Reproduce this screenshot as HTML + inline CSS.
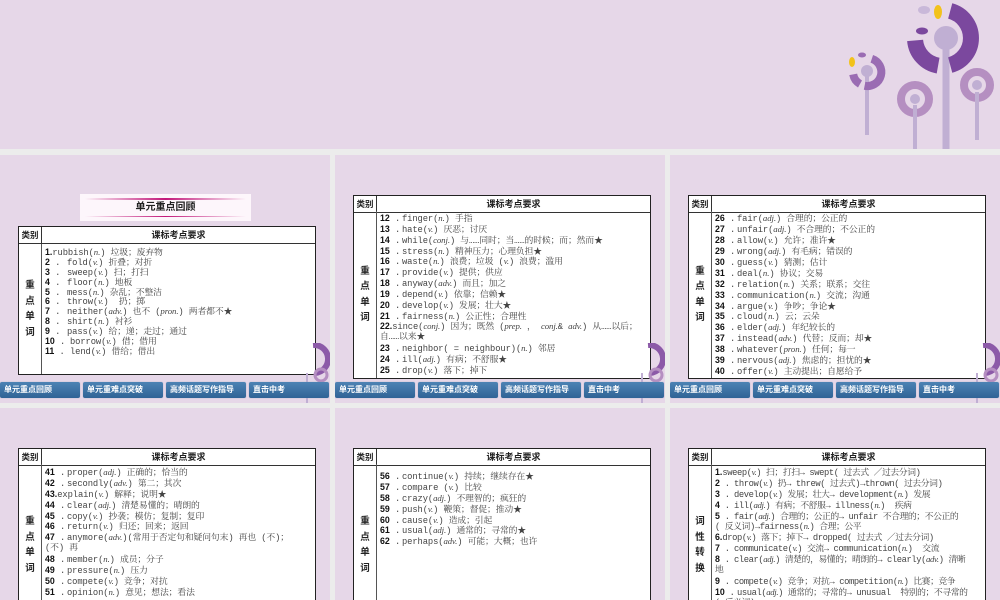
<!DOCTYPE html>
<html><head><meta charset="utf-8">
<style>
*{margin:0;padding:0;box-sizing:border-box}
body{width:1000px;height:600px;overflow:hidden;background:#ececec;position:relative;font-family:"Liberation Mono","Noto Serif CJK SC",monospace}
.sl{position:absolute;background:#e6d7e8;overflow:hidden}
.tb{position:absolute;left:18px;width:298px;background:#fff;border:1.5px solid #222;overflow:hidden}
.hd{height:17px;border-bottom:1px solid #333;position:relative;font-family:"Liberation Sans","Noto Sans CJK SC",sans-serif;font-weight:bold;font-size:9px;color:#222}
.hd .a{position:absolute;left:0;top:0;width:23px;height:16px;border-right:1px solid #333;text-align:center;line-height:16px;font-size:8.5px}
.hd .b{position:absolute;left:23px;right:0;top:0;text-align:center;line-height:16px}
.bd{position:absolute;left:0;right:0;bottom:0}
.bd .a{position:absolute;left:0;top:0;bottom:0;width:23px;border-right:1.5px solid #555;font-family:"Liberation Sans","Noto Sans CJK SC",sans-serif;font-weight:bold;font-size:9.5px;color:#222;display:flex;flex-direction:column;justify-content:center;align-items:center;line-height:15.5px}
.bd .c{position:absolute;left:26px;right:0;top:3px;font-size:8.8px;color:#444;white-space:nowrap;font-family:"Liberation Mono","Noto Serif CJK SC",monospace;letter-spacing:-0.1px;--lh:11px}
.c div{height:var(--lh);line-height:var(--lh);overflow:visible}
.c b{font-family:"Liberation Sans",sans-serif;color:#111;letter-spacing:0}
.c .n{display:inline-block;width:22px}
.c i{font-style:italic;font-family:"Liberation Serif",serif}
.nav{position:absolute;top:227px;height:16px;left:0;width:330px}
.nav div{position:absolute;top:0;height:16px;width:80px;background:linear-gradient(#4d83b4,#2f6396);border-radius:2px;color:#fff;font-family:"Liberation Sans","Noto Sans CJK SC",sans-serif;font-weight:bold;font-size:8px;line-height:16px;padding-left:4px;box-shadow:0 0 1px #9ab}
.deco{position:absolute;right:0;top:188px;width:45px;height:60px}
</style></head><body>

<!-- top slide -->
<div class="sl" style="left:0;top:0;width:1000px;height:149px">
<svg style="position:absolute;left:840px;top:0" width="160" height="150">
 <line x1="106" y1="40" x2="106" y2="150" stroke="#c0afd3" stroke-width="7"/>
 <path d="M110.2 10.95 A28 28 0 0 1 110.2 65.05" stroke="#7b489e" stroke-width="16" fill="none"/>
 <path d="M98.1 65.6 A28 28 0 0 1 75.1 40.4" stroke="#7b489e" stroke-width="16" fill="none"/>
 <circle cx="106" cy="38" r="12" fill="#c0afd3"/>
 <ellipse cx="84" cy="10" rx="6" ry="4" fill="#c9b8d9"/>
 <ellipse cx="98" cy="12" rx="4" ry="7" fill="#f2c21b"/>
 <ellipse cx="82" cy="31" rx="6" ry="3.5" fill="#7b489e"/>
 <line x1="27" y1="72" x2="27" y2="135" stroke="#c0afd3" stroke-width="4"/>
 <path d="M31.8 58.8 A14 14 0 0 1 24.6 85.8" stroke="#9a6cb3" stroke-width="8" fill="none"/>
 <path d="M20 84 A14 14 0 0 1 13.2 74.4" stroke="#9a6cb3" stroke-width="8" fill="none"/>
 <circle cx="27" cy="71" r="6" fill="#c0afd3"/>
 <ellipse cx="22" cy="55" rx="4" ry="2.5" fill="#9a6cb3"/>
 <ellipse cx="12" cy="62" rx="3" ry="5" fill="#f2c21b"/>
 <circle cx="75" cy="99" r="14" fill="none" stroke="#b58fc1" stroke-width="8"/>
 <circle cx="75" cy="99" r="5" fill="#c0afd3"/>
 <line x1="75" y1="105" x2="75" y2="150" stroke="#c0afd3" stroke-width="4"/>
 <circle cx="137" cy="85" r="13" fill="none" stroke="#b58fc1" stroke-width="8"/>
 <circle cx="137" cy="85" r="5" fill="#c0afd3"/>
 <line x1="137" y1="92" x2="137" y2="140" stroke="#c0afd3" stroke-width="4"/>
</svg>
</div>

<!-- Slide 1 -->
<div class="sl" style="left:0;top:155px;width:330px;height:248px">
<div style="position:absolute;left:80px;top:39px;width:171px;height:27px;background:#fdf6fb;text-align:center;font-family:'Liberation Sans','Noto Sans CJK SC',sans-serif;font-weight:bold;font-size:10px;line-height:27px;color:#222">
<div style="position:absolute;left:5px;right:5px;top:4px;height:1.5px;background:linear-gradient(90deg,transparent,#c2187a,transparent)"></div>
<div style="position:absolute;left:5px;right:5px;bottom:4px;height:1.5px;background:linear-gradient(90deg,transparent,#c2187a,transparent)"></div>
单元重点回顾</div>
<div class="tb" style="top:71px;height:149px">
<div class="hd"><div class="a">类别</div><div class="b">课标考点要求</div></div>
<div class="bd" style="top:17px"><div class="a">重<br>点<br>单<br>词</div>
<div class="c" style="--lh:9.9px;top:4px">
<div><b>1.</b>rubbish(<i>n.</i>) 垃圾；废弃物</div>
<div><span class="n"><b>2</b> .</span>fold(<i>v.</i>) 折叠；对折</div>
<div><span class="n"><b>3</b> .</span>sweep(<i>v.</i>) 扫；打扫</div>
<div><span class="n"><b>4</b> .</span>floor(<i>n.</i>) 地板</div>
<div><span class="n"><b>5</b> .</span>mess(<i>n.</i>) 杂乱；不整洁</div>
<div><span class="n"><b>6</b> .</span>throw(<i>v.</i>)&nbsp; 扔；掷</div>
<div><span class="n"><b>7</b> .</span>neither(<i>adv.</i>) 也不 (<i>pron.</i>) 两者都不★</div>
<div><span class="n"><b>8</b> .</span>shirt(<i>n.</i>) 衬衫</div>
<div><span class="n"><b>9</b> .</span>pass(<i>v.</i>) 给；递；走过；通过</div>
<div><span class="n" style="width:25px"><b>10</b> .</span>borrow(<i>v.</i>) 借；借用</div>
<div><span class="n" style="width:25px"><b>11</b> .</span>lend(<i>v.</i>) 借给；借出</div></div></div>
</div>
<svg class="deco" viewBox="0 0 45 60"><path d="M28 2 A14 14 0 0 1 30 30" stroke="#8c5aa8" stroke-width="6" fill="none"/><circle cx="36" cy="32" r="6" fill="none" stroke="#b58fc1" stroke-width="3"/><line x1="22" y1="30" x2="22" y2="60" stroke="#c0afd3" stroke-width="2"/></svg>
<div class="nav"><div style="left:0">单元重点回顾</div><div style="left:83px">单元重难点突破</div><div style="left:166px">高频话题写作指导</div><div style="left:249px">直击中考</div></div>
</div>

<!-- Slide 2 -->
<div class="sl" style="left:335px;top:155px;width:330px;height:248px">
<div class="tb" style="top:40px;height:184px">
<div class="hd"><div class="a">类别</div><div class="b">课标考点要求</div></div>
<div class="bd" style="top:15px"><div class="a">重<br>点<br>单<br>词</div>
<div class="c" style="--lh:10.85px;top:2px">
<div><span class="n"><b>12</b> .</span>finger(<i>n.</i>) 手指</div>
<div><span class="n"><b>13</b> .</span>hate(<i>v.</i>) 厌恶；讨厌</div>
<div><span class="n"><b>14</b> .</span>while(<i>conj.</i>) 与……同时；当……的时候；而；然而★</div>
<div><span class="n"><b>15</b> .</span>stress(<i>n.</i>) 精神压力；心理负担★</div>
<div><span class="n"><b>16</b> .</span>waste(<i>n.</i>) 浪费；垃圾 (<i>v.</i>) 浪费；滥用</div>
<div><span class="n"><b>17</b> .</span>provide(<i>v.</i>) 提供；供应</div>
<div><span class="n"><b>18</b> .</span>anyway(<i>adv.</i>) 而且；加之</div>
<div><span class="n"><b>19</b> .</span>depend(<i>v.</i>) 依靠；信赖★</div>
<div><span class="n"><b>20</b> .</span>develop(<i>v.</i>) 发展；壮大★</div>
<div><span class="n"><b>21</b> .</span>fairness(<i>n.</i>) 公正性；合理性</div>
<div><b>22.</b>since(<i>conj.</i>) 因为；既然 (<i>prep.</i> ， <i>conj.</i>&amp; <i>adv.</i>) 从……以后；</div>
<div>自……以来★</div>
<div><span class="n"><b>23</b> .</span>neighbor( = neighbour)(<i>n.</i>) 邻居</div>
<div><span class="n"><b>24</b> .</span>ill(<i>adj.</i>) 有病；不舒服★</div>
<div><span class="n"><b>25</b> .</span>drop(<i>v.</i>) 落下；掉下</div></div></div>
</div>
<svg class="deco" viewBox="0 0 45 60"><path d="M28 2 A14 14 0 0 1 30 30" stroke="#8c5aa8" stroke-width="6" fill="none"/><circle cx="36" cy="32" r="6" fill="none" stroke="#b58fc1" stroke-width="3"/><line x1="22" y1="30" x2="22" y2="60" stroke="#c0afd3" stroke-width="2"/></svg>
<div class="nav"><div style="left:0">单元重点回顾</div><div style="left:83px">单元重难点突破</div><div style="left:166px">高频话题写作指导</div><div style="left:249px">直击中考</div></div>
</div>

<!-- Slide 3 -->
<div class="sl" style="left:670px;top:155px;width:330px;height:248px">
<div class="tb" style="top:40px;height:184px">
<div class="hd"><div class="a">类别</div><div class="b">课标考点要求</div></div>
<div class="bd" style="top:15px"><div class="a">重<br>点<br>单<br>词</div>
<div class="c" style="--lh:10.95px;top:2px">
<div><span class="n"><b>26</b> .</span>fair(<i>adj.</i>) 合理的；公正的</div>
<div><span class="n"><b>27</b> .</span>unfair(<i>adj.</i>) 不合理的；不公正的</div>
<div><span class="n"><b>28</b> .</span>allow(<i>v.</i>) 允许；准许★</div>
<div><span class="n"><b>29</b> .</span>wrong(<i>adj.</i>) 有毛病；错误的</div>
<div><span class="n"><b>30</b> .</span>guess(<i>v.</i>) 猜测；估计</div>
<div><span class="n"><b>31</b> .</span>deal(<i>n.</i>) 协议；交易</div>
<div><span class="n"><b>32</b> .</span>relation(<i>n.</i>) 关系；联系；交往</div>
<div><span class="n"><b>33</b> .</span>communication(<i>n.</i>) 交流；沟通</div>
<div><span class="n"><b>34</b> .</span>argue(<i>v.</i>) 争吵；争论★</div>
<div><span class="n"><b>35</b> .</span>cloud(<i>n.</i>) 云；云朵</div>
<div><span class="n"><b>36</b> .</span>elder(<i>adj.</i>) 年纪较长的</div>
<div><span class="n"><b>37</b> .</span>instead(<i>adv.</i>) 代替；反而；却★</div>
<div><span class="n"><b>38</b> .</span>whatever(<i>pron.</i>) 任何；每一</div>
<div><span class="n"><b>39</b> .</span>nervous(<i>adj.</i>) 焦虑的；担忧的★</div>
<div><span class="n"><b>40</b> .</span>offer(<i>v.</i>) 主动提出；自愿给予</div></div></div>
</div>
<svg class="deco" viewBox="0 0 45 60"><path d="M28 2 A14 14 0 0 1 30 30" stroke="#8c5aa8" stroke-width="6" fill="none"/><circle cx="36" cy="32" r="6" fill="none" stroke="#b58fc1" stroke-width="3"/><line x1="22" y1="30" x2="22" y2="60" stroke="#c0afd3" stroke-width="2"/></svg>
<div class="nav"><div style="left:0">单元重点回顾</div><div style="left:83px">单元重难点突破</div><div style="left:166px">高频话题写作指导</div><div style="left:249px">直击中考</div></div>
</div>

<!-- Slide 4 -->
<div class="sl" style="left:0;top:408px;width:330px;height:192px">
<div class="tb" style="top:40px;height:160px">
<div class="hd"><div class="a">类别</div><div class="b">课标考点要求</div></div>
<div class="bd" style="top:15px"><div class="a" style="justify-content:flex-start;padding-top:50px">重<br>点<br>单<br>词</div>
<div class="c" style="--lh:10.9px;top:3px">
<div><span class="n"><b>41</b> .</span>proper(<i>adj.</i>) 正确的；恰当的</div>
<div><span class="n"><b>42</b> .</span>secondly(<i>adv.</i>) 第二；其次</div>
<div><b>43.</b>explain(<i>v.</i>) 解释；说明★</div>
<div><span class="n"><b>44</b> .</span>clear(<i>adj.</i>) 清楚易懂的；晴朗的</div>
<div><span class="n"><b>45</b> .</span>copy(<i>v.</i>) 抄袭；模仿；复制；复印</div>
<div><span class="n"><b>46</b> .</span>return(<i>v.</i>) 归还；回来；返回</div>
<div><span class="n"><b>47</b> .</span>anymore(<i>adv.</i>)(常用于否定句和疑问句末) 再也 (不)；</div>
<div>(不) 再</div>
<div><span class="n"><b>48</b> .</span>member(<i>n.</i>) 成员；分子</div>
<div><span class="n"><b>49</b> .</span>pressure(<i>n.</i>) 压力</div>
<div><span class="n"><b>50</b> .</span>compete(<i>v.</i>) 竞争；对抗</div>
<div><span class="n"><b>51</b> .</span>opinion(<i>n.</i>) 意见；想法；看法</div></div></div>
</div>
</div>

<!-- Slide 5 -->
<div class="sl" style="left:335px;top:408px;width:330px;height:192px">
<div class="tb" style="top:40px;height:160px">
<div class="hd"><div class="a">类别</div><div class="b">课标考点要求</div></div>
<div class="bd" style="top:15px"><div class="a" style="justify-content:flex-start;padding-top:50px">重<br>点<br>单<br>词</div>
<div class="c" style="--lh:10.9px;top:7px">
<div><span class="n"><b>56</b> .</span>continue(<i>v.</i>) 持续；继续存在★</div>
<div><span class="n"><b>57</b> .</span>compare (<i>v.</i>) 比较</div>
<div><span class="n"><b>58</b> .</span>crazy(<i>adj.</i>) 不理智的；疯狂的</div>
<div><span class="n"><b>59</b> .</span>push(<i>v.</i>) 鞭策；督促；推动★</div>
<div><span class="n"><b>60</b> .</span>cause(<i>v.</i>) 造成；引起</div>
<div><span class="n"><b>61</b> .</span>usual(<i>adj.</i>) 通常的；寻常的★</div>
<div><span class="n"><b>62</b> .</span>perhaps(<i>adv.</i>) 可能；大概；也许</div></div></div>
</div>
</div>

<!-- Slide 6 -->
<div class="sl" style="left:670px;top:408px;width:330px;height:192px">
<div class="tb" style="top:40px;height:160px">
<div class="hd"><div class="a">类别</div><div class="b">课标考点要求</div></div>
<div class="bd" style="top:15px"><div class="a" style="justify-content:flex-start;padding-top:50px">词<br>性<br>转<br>换</div>
<div class="c" style="--lh:10.9px;top:3px;letter-spacing:-0.4px">
<div><b>1.</b>sweep(<i>v.</i>) 扫；打扫→ swept( 过去式 ／过去分词)</div>
<div><span class="n" style="width:19px"><b>2</b> .</span>throw(<i>v.</i>) 扔→ threw( 过去式)→thrown( 过去分词)</div>
<div><span class="n" style="width:19px"><b>3</b> .</span>develop(<i>v.</i>) 发展；壮大→ development(<i>n.</i>) 发展</div>
<div><span class="n" style="width:19px"><b>4</b> .</span>ill(<i>adj.</i>) 有病；不舒服→ illness(<i>n.</i>)&nbsp; 疾病</div>
<div><span class="n" style="width:19px"><b>5</b> .</span>fair(<i>adj.</i>) 合理的；公正的→ unfair 不合理的；不公正的</div>
<div>( 反义词)→fairness(<i>n.</i>) 合理；公平</div>
<div><b>6.</b>drop(<i>v.</i>) 落下；掉下→ dropped( 过去式 ／过去分词)</div>
<div><span class="n" style="width:19px"><b>7</b> .</span>communicate(<i>v.</i>) 交流→ communication(<i>n.</i>)&nbsp; 交流</div>
<div><span class="n" style="width:19px"><b>8</b> .</span>clear(<i>adj.</i>) 清楚的，易懂的；晴朗的→ clearly(<i>adv.</i>) 清晰</div>
<div>地</div>
<div><span class="n" style="width:19px"><b>9</b> .</span>compete(<i>v.</i>) 竞争；对抗→ competition(<i>n.</i>) 比赛；竞争</div>
<div><span class="n"><b>10</b> .</span>usual(<i>adj.</i>) 通常的；寻常的→ unusual&nbsp; 特别的；不寻常的</div>
<div>( 反义词)</div></div></div>
</div>
</div>

</body></html>
